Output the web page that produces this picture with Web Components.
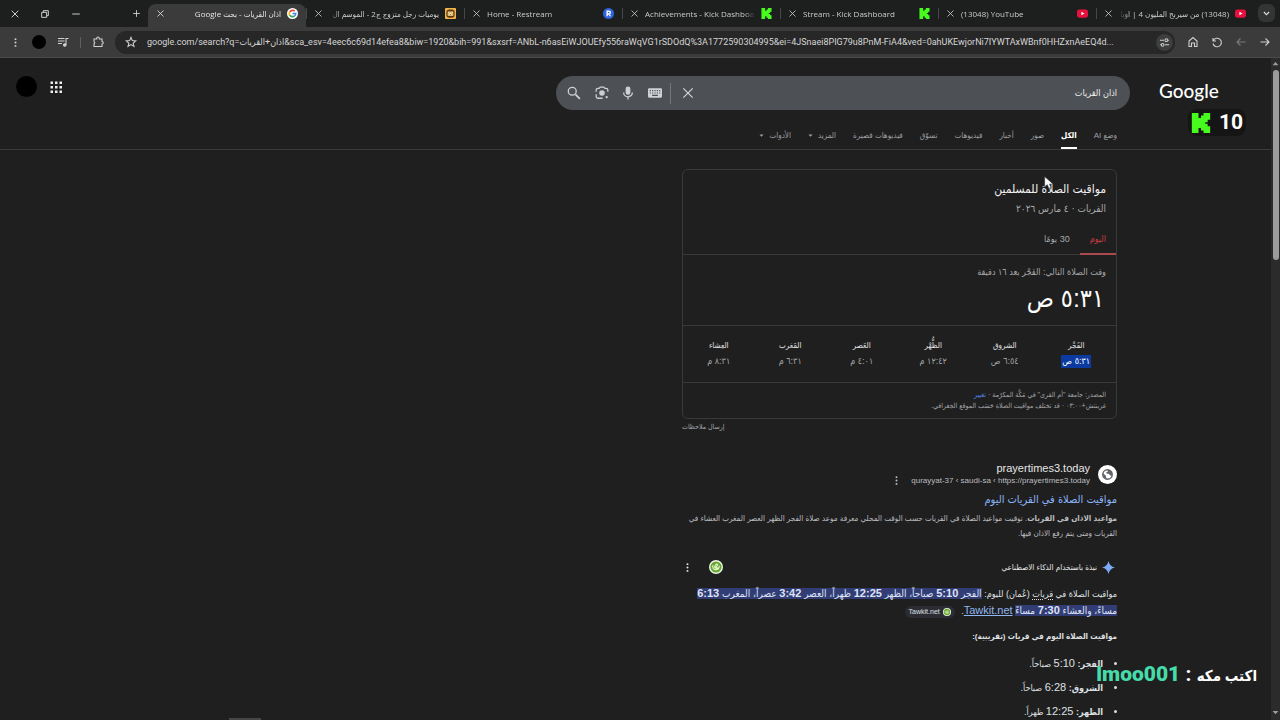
<!DOCTYPE html>
<html lang="ar" dir="rtl">
<head>
<meta charset="utf-8">
<title>اذان القريات - بحث Google</title>
<style>
html,body{margin:0;height:100%;background:#1f1f1f}
body{font-family:"Liberation Sans","DejaVu Sans Condensed","DejaVu Sans",sans-serif;color:#e8e8e8}
</style>
</head>
<body>
<browser-window></browser-window>
<script>
const ICONS={
close:'<path d="M4 4l16 16M20 4L4 20"/>',
restore:'<path d="M4 8h12v12H4zM8 8V4h12v12h-4"/>',
minimize:'<path d="M3 12h18"/>',
plus:'<path d="M12 3v18M3 12h18"/>',
chevron:'<path stroke-width="3" d="M5 8l7 7 7-7"/>',
dots:'<g fill="currentColor" stroke="none"><circle cx="12" cy="3" r="2.6"/><circle cx="12" cy="12" r="2.6"/><circle cx="12" cy="21" r="2.6"/></g>',
queue:'<path d="M2 5h13M2 10h13M2 15h8M18 18V5h5"/><circle cx="15.5" cy="18" r="2.5" fill="currentColor"/>',
puzzle:'<path d="M4 6h5.500v-1.500a2.500 2.500 0 0 1 5 0V6H20v5a2.500 2.500 0 0 1 0 5v5H4v-5.500a2.500 2.500 0 0 0 0-4.500z"/>',
star:'<path d="M12 3l2.700 6.200 6.700.6-5.100 4.400 1.600 6.600L12 17.300l-5.900 3.500 1.600-6.600L2.600 9.800l6.700-.6z"/>',
tune:'<path d="M2 7h9M20 7h2M2 17h2M13 17h9"/><circle cx="16" cy="7" r="3"/><circle cx="8" cy="17" r="3"/>',
home:'<path d="M4 10l8-7 8 7v11h-5v-7H9v7H4z"/>',
reload:'<path d="M4 4v6h6M4.500 9.500A8.500 8.500 0 1 1 4 15"/>',
back:'<path d="M21 12H4M11 5l-7 7 7 7"/>',
forward:'<path d="M3 12h17M13 5l7 7-7 7"/>',
search:'<circle cx="9" cy="9" r="6.800"/><path stroke-width="3" d="M14.500 14.500L22 22"/>',
lens:'<path d="M2 10V7a3 3 0 0 1 3-3h2l2-2h6l2 2h2a3 3 0 0 1 3 3v3M2 14v4a3 3 0 0 0 3 3h8"/><circle cx="12" cy="12" r="3.600" fill="currentColor"/><circle cx="20" cy="19" r="2" fill="currentColor" stroke="none"/>',
mic:'<rect x="9" y="2" width="6" height="12" rx="3" fill="currentColor"/><path d="M4.500 11a7.500 7.500 0 0 0 15 0M12 19v4"/>',
keyboard:'<path fill="currentColor" stroke="none" fill-rule="evenodd" d="M2 4h20a2 2 0 0 1 2 2v12a2 2 0 0 1-2 2H2a2 2 0 0 1-2-2V6a2 2 0 0 1 2-2zM3 7v2h2V7zm4 0v2h2V7zm4 0v2h2V7zm4 0v2h2V7zm4 0v2h2V7zM3 11v2h2v-2zm4 0v2h2v-2zm4 0v2h2v-2zm4 0v2h2v-2zm4 0v2h2v-2zM7 15v2h10v-2z"/>',
apps:'<g fill="currentColor" stroke="none"><path d="M1 1h5v5H1zM10 1h5v5h-5zM19 1h5v5h-5zM1 10h5v5H1zM10 10h5v5h-5zM19 10h5v5h-5zM1 19h5v5H1zM10 19h5v5h-5zM19 19h5v5h-5z"/></g>',
spark:'<path fill="#7cacf8" stroke="none" d="M12 0c1.500 7 5 10.500 12 12-7 1.500-10.500 5-12 12-1.500-7-5-10.500-12-12C7 10.500 10.500 7 12 0z"/>',
kick:'<path fill="#48fb1e" stroke="none" d="M1 0h8v6h3V3h3V0h8v8h-3v3h-3v2h3v3h3v8h-8v-3h-3v-3H9v6H1z"/>',
youtube:'<rect x="0" y="3" width="24" height="18" rx="5" fill="#e8103c" stroke="none"/><path d="M9.500 8v8l7-4z" fill="#fff" stroke="none"/>',
google:'<circle cx="12" cy="12" r="12" fill="#fff" stroke="none"/><g stroke-width="3.600"><path stroke="#ea4335" d="M17 7A7 7 0 0 0 6 8.500"/><path stroke="#fbbc05" d="M6 8.500a7 7 0 0 0 0 7"/><path stroke="#34a853" d="M6 15.500a7 7 0 0 0 10.500 1.800"/><path stroke="#4285f4" d="M12 12h7c0 2.200-.9 4-2.500 5.300"/></g>',
restream:'<circle cx="12" cy="12" r="12" fill="#2f66e0" stroke="none"/><path stroke="#fff" stroke-width="3" d="M9 18V7h4a3 3 0 0 1 0 6H9m4 0l3 5"/>',
series:'<rect width="24" height="24" rx="2" fill="#f5b548" stroke="none"/><rect x="3" y="3" width="18" height="18" rx="6" fill="#5e3a10" stroke="none"/><path stroke="#ffe2a0" d="M7 16V9h10v7zM10 16v-4h4v4"/>',
globe:'<circle cx="12" cy="12" r="12" fill="#fff" stroke="none"/><circle cx="12" cy="12" r="6" fill="#fff" stroke="#5f6368" stroke-width="1.800"/><path fill="#5f6368" stroke="none" d="M6 10l4 3.500v2l2 2.500c-4 0-6-4-6-8zM12 6c3-.5 5 1 6 4l-1 4-2-1-1-2h-3l-.5-2L13 8z"/>',
tawkit:'<circle cx="12" cy="12" r="12" fill="#edf5e5" stroke="none"/><circle cx="12" cy="12" r="9.500" fill="#68a832" stroke="none"/><path stroke="#e8f8d0" stroke-width="2" d="M6.500 9c-1.500 10 11.500 10 11 1M10 13.500c-1-5 4-8 4.500-5.500s-3 3-3 6h4"/>',
caret:'<path fill="currentColor" stroke="none" d="M2 7h20L12 18z"/>',
caretup:'<path fill="currentColor" stroke="none" d="M2 18h20L12 7z"/>',
pointer:'<path fill="#fff" stroke="#222" stroke-width="1" d="M3 1v19l5-4 3 7 4-2-3-6h7z"/>'
};
function define(name,html,setup){
  const t=document.createElement('template');t.innerHTML=html;
  customElements.define(name,class extends HTMLElement{
    constructor(){super();this.attachShadow({mode:'open'}).append(t.content.cloneNode(true));}
    connectedCallback(){if(setup)setup(this,this.shadowRoot);}
  });
}
const RESET='*{box-sizing:border-box}button{all:unset;box-sizing:border-box;display:flex;align-items:center;justify-content:center;flex:none}a{color:inherit;text-decoration:none}h1,h2,h3,p,ul{margin:0;padding:0;font-weight:400}input{all:unset;min-width:0}';

define('ui-icon','<style>:host{display:block;flex:none;width:var(--s,12px);height:var(--s,12px)}svg{display:block;width:100%;height:100%;overflow:visible}</style><svg viewBox="0 0 24 24" fill="none" stroke="currentColor" stroke-width="2.2" aria-hidden="true"></svg>',(el,r)=>{r.querySelector('svg').innerHTML=ICONS[el.getAttribute('name')]});

define('browser-tab',`<style>${RESET}
:host{display:flex;align-items:center;flex:0 1 158px;min-width:0;height:27px;padding:0 8px;gap:6px;position:relative;color:#c9cbca;font-family:"Open Sans","DejaVu Sans Condensed","DejaVu Sans",sans-serif;line-height:14px}
:host::after{content:"";position:absolute;left:0;top:8px;width:1px;height:11px;background:#464746}
:host([active]){background:#3b3b3b;border-radius:8px 8px 0 0;height:23px;margin-top:4px;padding-bottom:4px;color:#e6e6e6}
:host([active])::after{display:none}
.t{flex:1;min-width:0;overflow:hidden;white-space:nowrap;font-size:8px}
.t[dir=ltr]{-webkit-mask:linear-gradient(90deg,#000 90%,transparent);mask:linear-gradient(90deg,#000 90%,transparent)}
.t[dir=rtl]{-webkit-mask:linear-gradient(270deg,#000 90%,transparent);mask:linear-gradient(270deg,#000 90%,transparent)}
ui-icon{--s:11px}button ui-icon{--s:9px}
</style><ui-icon class="f"></ui-icon><span class="t"><slot></slot></span><button aria-label="إغلاق"><ui-icon name="close"></ui-icon></button>`,(el,r)=>{
 const n=document.createElement('ui-icon');n.setAttribute('name',el.getAttribute('icon'));r.querySelector('.f').replaceWith(n);
 r.querySelector('.t').dir=el.getAttribute('text')||'rtl';});

define('tab-strip',`<style>${RESET}
:host{display:flex;height:27px;background:#1d1f1e;color:#dcdcdc;padding:0 5px 0 0}
.more{width:17px;height:18px;border-radius:6px;background:#333534;margin:4px 0 0 4px;--s:9px}
.new{width:24px;height:27px;--s:9px}
.win{display:flex;margin-inline-start:auto}
.win button{width:31px;height:27px;--s:10px}
.win button:last-child{width:29px}
</style><button class="more" aria-label="بحث في علامات التبويب"><ui-icon name="chevron"></ui-icon></button>
<browser-tab icon="youtube">(13048) من سيربح المليون 4 | اوبا</browser-tab>
<browser-tab icon="youtube" text="ltr">(13048) YouTube</browser-tab>
<browser-tab icon="kick" text="ltr">Stream - Kick Dashboard</browser-tab>
<browser-tab icon="kick" text="ltr">Achievements - Kick Dashboard</browser-tab>
<browser-tab icon="restream" text="ltr">Home - Restream</browser-tab>
<browser-tab icon="series">يوميات رجل متزوج ج2 - الموسم ال</browser-tab>
<browser-tab icon="google" active>اذان القريات - بحث Google</browser-tab>
<button class="new" aria-label="علامة تبويب جديدة"><ui-icon name="plus"></ui-icon></button>
<div class="win"><button aria-label="تصغير"><ui-icon name="minimize"></ui-icon></button><button aria-label="استعادة"><ui-icon name="restore"></ui-icon></button><button aria-label="إغلاق النافذة"><ui-icon name="close"></ui-icon></button></div>`);

define('tool-bar',`<style>${RESET}
:host{display:flex;align-items:center;height:31px;background:#3b3b3b;border-bottom:1px solid #4a4a4a;padding:0 3px;color:#d0d0d0}
button{width:24px;height:24px;--s:12px}
.dim{color:#7b7b7b}
.box{flex:1;min-width:0;display:flex;align-items:center;height:23px;border-radius:12px;background:#272727;margin:0 6px 0 5px;padding:0 2px 0 6px}
.box input{flex:1;color:#d6d6d6;font:9px/20px Roboto,"DejaVu Sans Condensed","DejaVu Sans",sans-serif;margin:0 5px 0 6px}
.tune{width:17px;height:17px;border-radius:9px;background:#3d3e3e;--s:11px}
.star{width:20px}
i{width:1px;height:11px;background:#606060;margin:0 5px}
.av{width:14px;height:14px;border-radius:7px;background:#000;margin:0 5px}
.menu{--s:9px}
</style><button aria-label="إلى الأمام"><ui-icon name="forward"></ui-icon></button><button class="dim" aria-label="رجوع"><ui-icon name="back"></ui-icon></button><button aria-label="إعادة التحميل"><ui-icon name="reload"></ui-icon></button><button aria-label="الصفحة الرئيسية"><ui-icon name="home"></ui-icon></button>
<div class="box"><button class="tune" aria-label="معلومات الموقع"><ui-icon name="tune"></ui-icon></button><input dir="ltr" aria-label="العنوان" value="google.com/search?q=اذان+القريات&amp;sca_esv=4eec6c69d14efea8&amp;biw=1920&amp;bih=991&amp;sxsrf=ANbL-n6asEiWJOUEfy556raWqVG1rSDOdQ%3A1772590304995&amp;ei=4JSnaei8PIG79u8PnM-FiA4&amp;ved=0ahUKEwjorNi7IYWTAxWBnf0HHZxnAeEQ4d..."><button class="star" aria-label="إشارة مرجعية"><ui-icon name="star"></ui-icon></button></div>
<button aria-label="الإضافات"><ui-icon name="puzzle"></ui-icon></button><i></i><button aria-label="الوسائط"><ui-icon name="queue"></ui-icon></button><button class="av" aria-label="الملف الشخصي"></button><button class="menu" aria-label="القائمة"><ui-icon name="dots"></ui-icon></button>`);

define('search-header',`<style>${RESET}
:host{display:block;border-bottom:1px solid #3a3b3c}
.top{display:flex;align-items:flex-start;padding:18px 51px 0 16px;height:52px}
.logo{flex:0 0 61px;font:500 19px/30px Lato,sans-serif;color:#fff;direction:ltr}
form{display:flex;align-items:center;flex:0 1 574px;min-width:0;height:34px;border-radius:17px;background:#4d5156;margin:0 29px 0 0;padding:0 13px 0 11px;color:#ced1d5}
form input{flex:1;font-size:9px;line-height:20px;color:#f0f0f0}
form button{width:27px;height:24px;--s:14px}
form .x{width:33px}
form .k{width:31px}
form .v{width:23px}
form .l{width:29px}
form .go{width:13px;margin:0 7px 0 0}
i{width:1px;height:21px;background:#73777b}
.apps{margin-inline-start:auto;--s:12px;color:#eee;margin-left:13px;height:21px}
.me{width:21px;height:21px;border-radius:11px;background:#000}
nav{display:flex;gap:17px;padding:12px 154px 0 0;height:39px;align-items:stretch;font-size:8px;line-height:22px;color:#9d9fa1;white-space:nowrap}
nav a,nav button{display:flex;align-items:center;gap:5px;--s:5px}
nav .on{color:#fff;font-weight:700;border-bottom:2px solid #fff;padding-top:2px}
</style><div class="top"><a class="logo" href="#">Google</a><form role="search"><input type="text" aria-label="بحث" value="اذان القريات"><button type="button" class="x" aria-label="محو"><ui-icon name="close"></ui-icon></button><i></i><button type="button" class="k" aria-label="لوحة المفاتيح"><ui-icon name="keyboard"></ui-icon></button><button type="button" class="v" aria-label="بحث صوتي"><ui-icon name="mic"></ui-icon></button><button type="button" class="l" aria-label="بحث بالصور"><ui-icon name="lens"></ui-icon></button><button type="button" class="go" aria-label="بحث"><ui-icon name="search"></ui-icon></button></form>
<button class="apps" aria-label="تطبيقات"><ui-icon name="apps"></ui-icon></button><button class="me" aria-label="الحساب"></button></div>
<nav><a href="#">وضع AI</a><a class="on" href="#">الكل</a><a href="#">صور</a><a href="#">أخبار</a><a href="#">فيديوهات</a><a href="#">تسوّق</a><a href="#">فيديوهات قصيرة</a><button>المزيد<ui-icon name="caret"></ui-icon></button><button>الأدوات<ui-icon name="caret"></ui-icon></button></nav>`);

define('prayer-time',`<style>:host{display:flex;flex-direction:column;align-items:center;white-space:nowrap;font-size:9px;line-height:14px;color:#a2a4a6}
b{font-size:8px;font-weight:400;color:#e4e4e4}span{padding:0 1px;line-height:13px;margin-top:2px}
:host([on]) span{background:#0b3aa0;color:#fff}</style><b><slot></slot></b><span><slot name="t"></slot></span>`);

define('prayer-card',`<style>${RESET}
:host{display:block;font-size:9px;color:#a5a7a9}
section{border:1px solid #38393b;border-radius:6px}
section>*{border-bottom:1px solid #38393b}
.a{padding:10px 10px 0 0;height:85px}
h2{font-size:12px;line-height:18px;color:#f2f2f2}
.a p{font-size:10px;line-height:14px;margin-top:4px}
.tabs{display:flex;margin:11px -10px 0 0;line-height:24px;height:28px}
.tabs button{padding:0 10px;align-items:flex-start;border-bottom:2px solid transparent;height:28px}
.tabs .on{color:#c83c42;border-color:#a84a4e}
.b{padding:9px 10px 0 0;height:71px}
.b p{line-height:16px}.b strong{display:block;font-weight:400;font-size:25px;line-height:32px;margin-top:2px;color:#fff;padding-right:2px}
.c{display:grid;grid-template-columns:repeat(6,1fr);padding:13px 4px 13px 0;height:57px}
.d{border:0;padding:6px 10px 0 0;height:35px;font-size:7px;line-height:11px}
.d a{color:#5486e8}
.fb{display:block;text-align:end;font-size:7px;line-height:16px}
</style><section><div class="a"><h2>مواقيت الصلاة للمسلمين</h2><p>القريات · ٤ مارس ٢٠٢٦</p><div class="tabs"><button class="on">اليوم</button><button>30 يومًا</button></div></div>
<div class="b"><p>وقت الصلاة التالي: الفَجْر بعد ١٦ دقيقة</p><strong>٥:٣١ ص</strong></div>
<div class="c"><prayer-time on>الفَجْر<span slot="t">٥:٣١ ص</span></prayer-time><prayer-time>الشروق<span slot="t">٦:٥٤ ص</span></prayer-time><prayer-time>الظُّهْر<span slot="t">١٢:٤٢ م</span></prayer-time><prayer-time>العَصر<span slot="t">٤:٠١ م</span></prayer-time><prayer-time>المَغرب<span slot="t">٦:٣١ م</span></prayer-time><prayer-time>العِشاء<span slot="t">٨:٣١ م</span></prayer-time></div>
<div class="d"><p>المصدر: جامعة "أم القرى" في مَكَّة المكرّمة · <a href="#">تغيير</a></p><p>غرينتش+٠٣:٠٠ · قد تختلف مواقيت الصلاة حَسَب الموقع الجغرافي.</p></div></section>
<a class="fb" href="#">إرسال ملاحظات</a>`);

define('search-result',`<style>${RESET}
:host{display:block;color:#bcbec0}
.s{display:flex;align-items:center;height:26px;--s:19px}
.n{margin-right:8px;white-space:nowrap}
.t{font-size:11px;line-height:14px;color:#e6e6e6}
.u{font-size:8px;line-height:12px}
.m{align-self:flex-end;--s:9px;margin:0 10px 2px 0}
h3{font-size:11px;line-height:24px;color:#8ab4f8}
p{font-size:8px;line-height:15px;white-space:nowrap}
</style><div class="s"><ui-icon name="globe"></ui-icon><div class="n"><div class="t">prayertimes3.today</div><div class="u">https://prayertimes3.today&rlm; › &rlm;saudi-sa&rlm; › &rlm;qurayyat-37</div></div><button class="m" aria-label="المزيد"><ui-icon name="dots"></ui-icon></button></div>
<h3><a href="#">مواقيت الصلاة في القريات اليوم</a></h3>
<p><b>مواعيد الاذان في القريات</b>. توقيت مواعيد الصلاة في القريات حسب الوقت المحلي معرفة موعد صلاة الفجر الظهر العصر المغرب العشاء في<br>القريات ومتى يتم رفع الاذان فيها.</p>`);

define('ai-overview',`<style>${RESET}
:host{display:block;font-size:9px;color:#dfe0e2}
.h{display:flex;align-items:center;height:16px;font-size:8px;color:#e8e8e8}
.h .sp{--s:13px;margin:0 2px 0 5px}.h .g{--s:14px;margin-right:auto}.h .m{--s:9px;margin:0 17px 0 1px}
p{line-height:16px;margin-top:10px;white-space:nowrap}
p b{font-size:11px}
mark{font-size:10px;background:#323d75;color:#dfe3f5}
p a{font-size:11px;color:#8fb6ee;text-decoration:underline}
.chip{display:inline-flex;align-items:center;gap:3px;background:#2b2c34;border-radius:6px;padding:0 4px;font-size:7px;line-height:12px;--s:8px;margin-right:4px;vertical-align:middle}
u{text-decoration:underline dotted;text-underline-offset:2px}
h3{font-size:8px;line-height:16px;font-weight:700;margin-top:10px}
ul{list-style:none;margin-top:6px}
li{display:flex;align-items:center;line-height:24px;height:24px}
li::before{content:"";width:3px;height:3px;border-radius:2px;background:#ddd;margin:0 0 0 11px}
li i{font-style:normal;font-size:11px}
</style><div class="h"><ui-icon class="sp" name="spark"></ui-icon>نبذة باستخدام الذكاء الاصطناعي<ui-icon class="g" name="tawkit"></ui-icon><button class="m" aria-label="المزيد"><ui-icon name="dots"></ui-icon></button></div>
<p>مواقيت الصلاة في <u>قريات</u> (عُمان) لليوم: <mark>الفجر <b>5:10</b> صباحاً، الظهر <b>12:25</b> ظهراً، العصر <b>3:42</b> عصراً، المغرب <b>6:13</b></mark><br><mark>مساءً، والعشاء <b>7:30</b> مساءً</mark> <a href="#">Tawkit.net</a>. <span class="chip"><ui-icon name="tawkit"></ui-icon>Tawkit.net</span></p>
<h3>مواقيت الصلاة اليوم في قريات (تقريبية):</h3>
<ul><li><span><b>الفجر:</b> <i>5:10</i> صباحاً.</span></li><li><span><b>الشروق:</b> <i>6:28</i> صباحاً.</span></li><li><span><b>الظهر:</b> <i>12:25</i> ظهراً.</span></li></ul>`);

define('page-scrollbar',`<style>:host{display:flex;flex-direction:column;align-items:center;flex:0 0 9px;background:#2b2b2b;color:#9c9c9c;--s:7px;padding:2px 0 4px}
div{flex:0 0 190px;width:6px;border-radius:3px;background:#9c9c9c;margin:3px 0 auto}</style><ui-icon name="caretup"></ui-icon><div></div><ui-icon name="caret"></ui-icon>`);

define('stream-overlay',`<style>:host{display:block}
.k{position:absolute;right:34px;top:109px;display:flex;align-items:center;gap:8px;height:27px;padding:0 3px;border-radius:9px;background:#141514;direction:ltr;--s:20px;font:700 21px/27px Roboto,sans-serif;color:#fff}
.c{position:absolute;right:23px;bottom:31px;font:700 21px/26px Roboto,"DejaVu Sans Condensed","DejaVu Sans",sans-serif;color:#fff;white-space:nowrap}
.c small{font-size:15px}.c b{color:#45dcaa}
.p{position:absolute;left:1043px;top:176px;--s:13px}
.l{position:absolute;left:229px;bottom:0;width:32px;height:2px;background:#464646}
</style><div class="k"><ui-icon name="kick"></ui-icon>10</div><div class="c"><small>اكتب مكه</small> : <b>lmoo001</b></div><ui-icon class="p" name="pointer"></ui-icon><div class="l"></div>`);

define('browser-window',`<style>${RESET}
:host{display:flex;flex-direction:column;height:100vh;overflow:hidden;position:relative;background:#1f1f1f}
.v{flex:1;display:flex;min-height:0}
main{flex:1;min-width:0;overflow:hidden}
.col{width:435px;max-width:100%;margin:19px 154px 0 0}
search-result{margin-top:26px}
ai-overview{margin-top:18px}
</style><tab-strip></tab-strip><tool-bar></tool-bar><div class="v"><page-scrollbar></page-scrollbar><main><search-header></search-header><div class="col"><prayer-card></prayer-card><search-result></search-result><ai-overview></ai-overview></div></main></div><stream-overlay></stream-overlay>`);
</script>
</body>
</html>
